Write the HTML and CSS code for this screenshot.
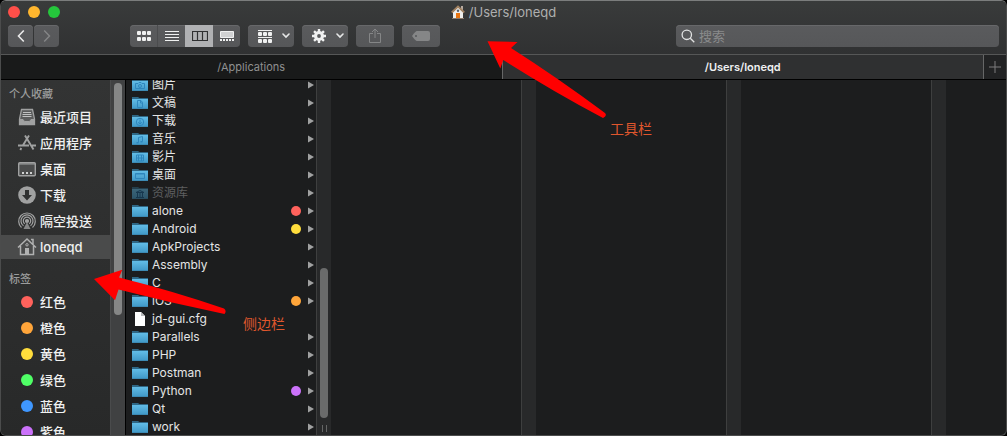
FILE: index.html
```html
<!DOCTYPE html>
<html lang="zh-CN">
<head>
<meta charset="utf-8">
<meta name="viewport" content="width=device-width, initial-scale=1">
<title>/Users/loneqd</title>
<link rel="stylesheet" href="styles.css">
</head>
<body>
<svg class="defs" aria-hidden="true">
  <defs>
    <linearGradient id="blue" x1="0" y1="0" x2="0" y2="1"><stop offset="0" stop-color="#62bce6"/><stop offset="1" stop-color="#3f97c6"/></linearGradient>
    <symbol id="folder" viewBox="0 0 16 14">
      <path d="M0 1h6l1.500 1H16v2H0z" fill="#2f6785"/>
      <path d="M0 3h16v10H0z" fill="url(#blue)"/>
      <path d="M0 12.500h16" stroke="#3c8ab4"/>
    </symbol>
    <symbol id="file" viewBox="0 0 16 14"><path d="M3 0h6l4 4v10H3z" fill="#fff"/><path d="M9 0v4h4z" fill="#b9bbbc"/></symbol>
    <symbol id="more" viewBox="0 0 6 8"><path d="M0 .5v7L6 4z" fill="#a0a1a1"/></symbol>
    <symbol id="chev" viewBox="0 0 8 6"><path d="M1 1l3 3 3-3" fill="none" stroke="#e6e7e7" stroke-width="1.600" stroke-linecap="round"/></symbol>
  </defs>
</svg>

<main class="window">
  <header class="header">
    <div class="titlebar">
      <div class="lights">
        <button class="light close" aria-label="关闭"></button>
        <button class="light minimise" aria-label="最小化"></button>
        <button class="light expand" aria-label="全屏"></button>
      </div>
      <h1 class="title">
        <svg width="14" height="14" viewBox="0 0 14 14" aria-hidden="true"><path d="M10 1h2v4h-2z" fill="#b7aaa0"/><path d="M2 7l5-5 5 5v6H2z" fill="#eeeeec"/><path d="M.7 7.500L7 1.500l6.300 6" fill="none" stroke="#a28363" stroke-width="1.800"/><path d="M5 8h4v5H5z" fill="#e87511"/><circle cx="7" cy="5.800" r="1.200" fill="#57616d"/><path d="M1 13.500h12" stroke="#8a7969"/></svg>
        <span>/Users/loneqd</span>
      </h1>
    </div>
    <div class="toolbar">
      <div class="nav">
        <button class="btn back" aria-label="后退"><svg width="8" height="14" viewBox="0 0 8 14"><path d="M6.800 1.500L1.500 7l5.300 5.500" fill="none" stroke="#e8e8e8" stroke-width="1.600"/></svg></button>
        <button class="btn forward" aria-label="前进"><svg width="8" height="14" viewBox="0 0 8 14"><path d="M1.200 1.500L6.500 7l-5.300 5.500" fill="none" stroke="#858687" stroke-width="1.400"/></svg></button>
      </div>
      <div class="views">
        <button class="seg" aria-label="图标"><svg width="14" height="10" viewBox="0 0 14 10" fill="#f0f1f1"><rect width="4" height="4" rx="1"/><rect x="5" width="4" height="4" rx="1"/><rect x="10" width="4" height="4" rx="1"/><rect y="6" width="4" height="4" rx="1"/><rect x="5" y="6" width="4" height="4" rx="1"/><rect x="10" y="6" width="4" height="4" rx="1"/></svg></button>
        <button class="seg" aria-label="列表"><svg width="14" height="10" viewBox="0 0 14 10"><path d="M0 .5h14M0 3.500h14M0 6.500h14M0 9.500h14" stroke="#f0f1f1"/></svg></button>
        <button class="seg active" aria-label="分栏" aria-pressed="true"><svg width="16" height="10" viewBox="0 0 16 10"><path d="M.5.5h15v9H.5zM5.500.5v9M10.500.5v9" fill="none" stroke="#2f3031" stroke-width="1.200"/></svg></button>
        <button class="seg" aria-label="画廊"><svg width="14" height="10" viewBox="0 0 14 10" fill="#f0f1f1"><path d="M.5.5h13v6H.5z" fill="#d0d1d2" stroke="#f0f1f1"/><path d="M0 8h2v2H0zM3 8h2v2H3zM6 8h2v2H6zM9 8h2v2H9zM12 8h2v2h-2z"/></svg></button>
      </div>
      <button class="btn menu" aria-label="分组"><svg width="14" height="13" viewBox="0 0 14 13" fill="#f0f1f1"><path d="M0 0h14v1H0zM0 7h14v1H0z"/><rect y="2" width="4" height="4" rx="1"/><rect x="5" y="2" width="4" height="4" rx="1"/><rect x="10" y="2" width="4" height="4" rx="1"/><rect y="9" width="4" height="4" rx="1"/><rect x="5" y="9" width="4" height="4" rx="1"/><rect x="10" y="9" width="4" height="4" rx="1"/></svg><svg width="8" height="6"><use href="#chev"/></svg></button>
      <button class="btn menu" aria-label="操作"><svg width="14" height="14" viewBox="0 0 14 14"><path d="M7 0v14M0 7h14M2.050 2.050l9.900 9.900M11.950 2.050l-9.900 9.900" stroke="#f0f1f1" stroke-width="2.400"/><circle cx="7" cy="7" r="3.500" fill="none" stroke="#f0f1f1" stroke-width="3"/><circle cx="7" cy="7" r="1.900" fill="#5b5c5e"/></svg><svg width="8" height="6"><use href="#chev"/></svg></button>
      <button class="btn action" aria-label="共享"><svg width="12" height="16" viewBox="0 0 12 16" fill="none" stroke="#858687"><path d="M4 5.500H.5v9h11v-9H8M6 10V1M3 4l3-3 3 3"/></svg></button>
      <button class="btn action" aria-label="标签"><svg width="18" height="10" viewBox="0 0 18 10"><path d="M5 0h11a2 2 0 0 1 2 2v6a2 2 0 0 1-2 2H5Q3.500 10 0 5 3.500 0 5 0z" fill="#858687"/><circle cx="4" cy="5" r="1" fill="#56575a"/></svg></button>
      <label class="search">
        <svg width="14" height="14" viewBox="0 0 14 14" fill="none" stroke="#e1e2e2" stroke-width="1.300"><circle cx="5.800" cy="5.800" r="4.700"/><path d="M9.300 9.300l4 4"/></svg>
        <input type="search" placeholder="搜索" aria-label="搜索">
      </label>
    </div>
  </header>

  <div class="tabs" role="tablist">
    <button class="tab" role="tab">/Applications</button>
    <button class="tab current" role="tab" aria-selected="true">/Users/loneqd</button>
    <button class="add" aria-label="新建标签页"><svg width="12" height="12" viewBox="0 0 12 12"><path d="M6 0v12M0 6h12" stroke="#7c7d7d"/></svg></button>
  </div>

  <div class="content">
    <aside class="sidebar">
      <nav class="places">
        <h2 class="group">个人收藏</h2>
        <a class="place" href="#"><svg width="20" height="20" viewBox="0 0 20 20" fill="none" stroke="#a0a1a1"><path d="M4.500 2.500h11L17.500 12v5.500h-15V12z" fill="#5b5c5c" stroke-width="1.300"/><path d="M6 5.500h8M5.500 7.500h9M5.500 9.500h9" stroke="#c0c1c1"/><path d="M3 12.500h3l1.500 2h5l1.500-2h3v4.500H3z" fill="#a0a1a1"/></svg>最近项目</a>
        <a class="place" href="#"><svg width="20" height="20" viewBox="0 0 20 20" fill="none" stroke="#a0a1a1" stroke-width="1.900"><path d="M8 2.500l8.500 14M12 2.500L5.500 13M1 12.500h11M15 12.500h4M4.300 15l-1 2"/></svg>应用程序</a>
        <a class="place" href="#"><svg width="20" height="20" viewBox="0 0 20 20"><rect x="1.700" y="3.700" width="16.600" height="13" rx="1" fill="#4b4c4c" stroke="#a0a1a1" stroke-width="1.400"/><path d="M2 5h16" stroke="#a0a1a1"/><path d="M5 13h2v2H5zM9 13h2v2H9zM13 13h2v2h-2z" fill="#d0d1d1"/></svg>桌面</a>
        <a class="place" href="#"><svg width="20" height="20" viewBox="0 0 20 20"><circle cx="10" cy="10" r="8.800" fill="#a0a1a1"/><path d="M8 5h4v5h3l-5 5.500L5 10h3z" fill="#303131"/></svg>下载</a>
        <a class="place" href="#"><svg width="20" height="20" viewBox="0 0 20 20" fill="none" stroke="#a0a1a1" stroke-width="1.200"><path d="M4.500 16.500a8.300 8.300 0 1 1 11 0M6.500 14.800a6 6 0 1 1 7 0M7.800 12.800a3.700 3.700 0 1 1 4.400 0"/><circle cx="10" cy="10" r="1.500" fill="#a0a1a1"/><path d="M10 11l-3.500 7h7z" fill="#858686" stroke="none"/></svg>隔空投送</a>
        <a class="place selected" href="#" aria-current="page"><svg width="20" height="20" viewBox="0 0 20 20" fill="none" stroke="#b0b1b1" stroke-width="1.500"><path d="M14 2.500h2v5M1 10.500L10 2l9 8.500M3.500 9v8.500h13V9"/><path d="M8 11h4v6H8z" fill="#b0b1b1" stroke="none"/><circle cx="10" cy="7.800" r="1.200" stroke-width="1"/></svg>loneqd</a>
        <h2 class="group second">标签</h2>
        <a class="place" href="#"><span class="tag"><i class="dot red"></i></span>红色</a>
        <a class="place" href="#"><span class="tag"><i class="dot orange"></i></span>橙色</a>
        <a class="place" href="#"><span class="tag"><i class="dot yellow"></i></span>黄色</a>
        <a class="place" href="#"><span class="tag"><i class="dot green"></i></span>绿色</a>
        <a class="place" href="#"><span class="tag"><i class="dot blue"></i></span>蓝色</a>
        <a class="place" href="#"><span class="tag"><i class="dot purple"></i></span>紫色</a>
      </nav>
      <div class="side-track"><div class="side-thumb"></div></div>
    </aside>

    <section class="column">
      <div class="files">
        <a class="row" href="#"><svg class="icon" viewBox="0 0 16 14"><use href="#folder"/><g fill="none" stroke="#2f86bd"><path d="M3.500 5.500H6l1-1h2l1 1h2.500v5h-9z"/><circle cx="8" cy="8" r="1.500"/></g></svg><span class="name">图片</span><svg class="more"><use href="#more"/></svg></a>
        <a class="row" href="#"><svg class="icon" viewBox="0 0 16 14"><use href="#folder"/><path d="M5.500 4.500H9l1.500 2v5h-5zM8.500 4.500v2.500h2" fill="none" stroke="#2f86bd"/></svg><span class="name">文稿</span><svg class="more"><use href="#more"/></svg></a>
        <a class="row" href="#"><svg class="icon" viewBox="0 0 16 14"><use href="#folder"/><g fill="none" stroke="#2f86bd"><circle cx="8" cy="8" r="3.700"/><path d="M8 5.500v4.500M6.200 8.300L8 10l1.800-1.700"/></g></svg><span class="name">下载</span><svg class="more"><use href="#more"/></svg></a>
        <a class="row" href="#"><svg class="icon" viewBox="0 0 16 14"><use href="#folder"/><path d="M6.500 10.500V5.500l4-1v5" fill="none" stroke="#2f86bd"/><path d="M4.500 10h2v1.500h-2zM8.500 9h2v1.500h-2z" fill="#2f86bd"/></svg><span class="name">音乐</span><svg class="more"><use href="#more"/></svg></a>
        <a class="row" href="#"><svg class="icon" viewBox="0 0 16 14"><use href="#folder"/><path d="M4.500 5h7v6h-7zM6.500 5v6M9.500 5v6M4.500 8h7" fill="none" stroke="#2f86bd"/></svg><span class="name">影片</span><svg class="more"><use href="#more"/></svg></a>
        <a class="row" href="#"><svg class="icon" viewBox="0 0 16 14"><use href="#folder"/><path d="M3.500 5.500h9v5h-9zM3.500 6h9" fill="none" stroke="#2f86bd"/></svg><span class="name">桌面</span><svg class="more"><use href="#more"/></svg></a>
        <a class="row dim" href="#"><svg class="icon" viewBox="0 0 16 14"><use href="#folder"/><path d="M4 6.500l4-2 4 2zM4 11.500h8M5.500 7v4M8 7v4M10.500 7v4" fill="none" stroke="#12578a"/></svg><span class="name">资源库</span><svg class="more"><use href="#more"/></svg></a>
        <a class="row" href="#"><svg class="icon"><use href="#folder"/></svg><span class="name">alone</span><i class="dot small red"></i><svg class="more"><use href="#more"/></svg></a>
        <a class="row" href="#"><svg class="icon"><use href="#folder"/></svg><span class="name">Android</span><i class="dot small yellow"></i><svg class="more"><use href="#more"/></svg></a>
        <a class="row" href="#"><svg class="icon"><use href="#folder"/></svg><span class="name">ApkProjects</span><svg class="more"><use href="#more"/></svg></a>
        <a class="row" href="#"><svg class="icon"><use href="#folder"/></svg><span class="name">Assembly</span><svg class="more"><use href="#more"/></svg></a>
        <a class="row" href="#"><svg class="icon"><use href="#folder"/></svg><span class="name">C</span><svg class="more"><use href="#more"/></svg></a>
        <a class="row" href="#"><svg class="icon"><use href="#folder"/></svg><span class="name">iOS</span><i class="dot small orange"></i><svg class="more"><use href="#more"/></svg></a>
        <a class="row" href="#"><svg class="icon"><use href="#file"/></svg><span class="name">jd-gui.cfg</span></a>
        <a class="row" href="#"><svg class="icon"><use href="#folder"/></svg><span class="name">Parallels</span><svg class="more"><use href="#more"/></svg></a>
        <a class="row" href="#"><svg class="icon"><use href="#folder"/></svg><span class="name">PHP</span><svg class="more"><use href="#more"/></svg></a>
        <a class="row" href="#"><svg class="icon"><use href="#folder"/></svg><span class="name">Postman</span><svg class="more"><use href="#more"/></svg></a>
        <a class="row" href="#"><svg class="icon"><use href="#folder"/></svg><span class="name">Python</span><i class="dot small purple"></i><svg class="more"><use href="#more"/></svg></a>
        <a class="row" href="#"><svg class="icon"><use href="#folder"/></svg><span class="name">Qt</span><svg class="more"><use href="#more"/></svg></a>
        <a class="row" href="#"><svg class="icon"><use href="#folder"/></svg><span class="name">work</span><svg class="more"><use href="#more"/></svg></a>
      </div>
      <div class="track"><div class="thumb"></div><div class="grip"></div></div>
    </section>
    <section class="column"><div class="files"></div><div class="track"></div></section>
    <section class="column"><div class="files"></div><div class="track"></div></section>
    <section class="column"><div class="files"></div><div class="track"></div></section>
  </div>
</main>

<svg class="arrow arrow-toolbar" width="120" height="80" viewBox="0 0 120 80" aria-hidden="true"><path d="M1.500 1.300L31.500 2 25 8Q72 38 119 73 121.500 76 117 78 66 51 17.300 20L14.300 28.500z"/></svg>
<p class="note note-toolbar">工具栏</p>
<svg class="arrow arrow-sidebar" width="134" height="48" viewBox="0 0 134 48" aria-hidden="true"><path d="M1 12L29.300 2.700 26 10.500Q80 24 131 41.500 134 44 131.500 47 78 36 25.500 22.500L22 33.300z"/></svg>
<p class="note note-sidebar">侧边栏</p>
</body>
</html>
```

FILE: styles.css
```css
* { box-sizing: border-box; }

body {
  margin: 0;
  background: #000;
  color: #e4e5e5;
  font-family: Inter, "Noto Sans CJK SC", sans-serif;
  font-size: 12px;
}

button, input {
  margin: 0;
  padding: 0;
  border: 0;
  background: none;
  color: inherit;
  font: inherit;
}

a { color: inherit; text-decoration: none; }
h1, h2, p { margin: 0; font-weight: 400; }
svg { display: block; flex: none; }
.defs { position: absolute; width: 0; height: 0; }

.window {
  display: flex;
  flex-direction: column;
  height: 100vh;
  overflow: hidden;
  border: 1px solid #4b4c4c;
  border-top-color: #7b7d7d;
  border-radius: 6px;
  background: #1c1d1e;
}

.header {
  border-bottom: 1px solid #565757;
  background: linear-gradient(#393b3b, #303132);
}

.titlebar {
  display: grid;
  grid-template-columns: 1fr auto 1fr;
  align-items: center;
  height: 21px;
  padding: 0 7px;
}

.lights { display: flex; gap: 8px; }
.light { width: 12px; height: 12px; border-radius: 50%; }
.close { background: #ff4f49; }
.minimise { background: #ffb62e; }
.expand { background: #25c73c; }

.title {
  display: flex;
  align-items: center;
  gap: 4px;
  color: #aeafaf;
  font-size: 13px;
}

.toolbar {
  display: flex;
  gap: 8px;
  padding: 3px 7px 7px;
}

.nav { display: flex; gap: 1px; margin-right: 63px; }

.btn, .views, .search {
  height: 22px;
  border-radius: 4px;
  background: linear-gradient(#5a5b5d, #565759);
  box-shadow: inset 0 1px #67686a;
}

.btn {
  display: flex;
  align-items: center;
  justify-content: center;
}
.back, .forward { width: 25px; }
.menu { width: 46px; gap: 10px; padding-left: 6px; }
.action { width: 38px; }

.views { display: flex; overflow: hidden; width: 110px; }
.seg {
  display: flex;
  flex: 1;
  align-items: center;
  justify-content: center;
  border-left: 1px solid #4b4c4e;
}
.seg:first-child { border-left: 0; }
.seg.active { border-color: #b0b1b3; background: #b0b1b3; }
.seg.active + .seg { border-left: 0; }

.search {
  display: flex;
  flex: 0 1 323px;
  align-items: center;
  gap: 4px;
  margin-left: auto;
  padding: 0 5px;
}
.search input { flex: 1; min-width: 0; outline: 0; font-size: 13px; }
.search input::placeholder { color: #8a8b8c; opacity: 1; }

.tabs {
  display: flex;
  height: 25px;
  border-bottom: 1px solid #000;
  background: #191a1a;
}
.tab { width: calc(50% - 2px); color: #8f9090; font-size: 11px; }
.tab.current {
  flex: 1;
  border: solid #666767;
  border-width: 0 1px;
  background: #2f3031;
  color: #f0f1f1;
  font-weight: 600;
}
.add {
  display: flex;
  align-items: center;
  justify-content: center;
  width: 22px;
  background: #222324;
}

.content { display: flex; flex: 1; min-height: 0; }

.sidebar {
  display: flex;
  flex: none;
  width: 125px;
  border-right: 1px solid #000;
  background: linear-gradient(#333434, #282929);
}
.places { flex: 1; overflow: hidden; }

.group {
  height: 25px;
  padding-left: 8px;
  color: #9b9c9c;
  font-size: 11px;
  font-weight: 500;
  line-height: 28px;
}
.group.second { height: 29px; line-height: 36px; }

.place {
  display: flex;
  align-items: center;
  gap: 3px;
  height: 24px;
  margin-bottom: 2px;
  padding-left: 16px;
  color: #f0f1f1;
  font-size: 13px;
  font-weight: 500;
  line-height: 24px;
}
.place.selected { background: #4a4b4b; }

.tag { display: flex; justify-content: center; width: 20px; }
.dot { flex: none; width: 12px; height: 12px; border-radius: 50%; }
.dot.small { width: 10px; height: 10px; margin-right: 7px; }
.red { background: #ff625c; }
.orange { background: #ffa53a; }
.yellow { background: #ffdd3c; }
.green { background: #4fff66; }
.blue { background: #3f97ff; }
.purple { background: #cb72fa; }

.side-track {
  width: 15px;
  padding: 3px 3px 0;
  border-left: 1px solid #4a4b4c;
  background: #404142;
}
.side-thumb { height: 66%; border-radius: 4px; background: #858686; }

.column { display: flex; flex: none; width: 205px; }
.files { flex: 1; overflow: hidden; }

.row {
  display: flex;
  align-items: center;
  height: 18px;
  padding: 0 2px 0 6px;
  line-height: 18px;
}
.row:first-child { margin-top: -4px; }
.icon { width: 16px; height: 14px; margin-right: 4px; }
.name { flex: 1; white-space: nowrap; }
.more { width: 6px; height: 8px; }
.dim .icon { opacity: .45; }
.dim .name { color: #5e5f60; }

.track {
  display: flex;
  flex-direction: column;
  justify-content: flex-end;
  align-items: center;
  width: 15px;
  border-left: 1px solid #3e3f3f;
  background: #28292a;
}
.thumb { width: 8px; height: 150px; border-radius: 4px; background: #6a6b6b; }
.grip {
  width: 5px;
  height: 7px;
  margin: 7px 0 3px;
  border: solid #656666;
  border-width: 0 1px;
}

/* Annotations drawn over the window */
.arrow { position: absolute; fill: #f00; }
.arrow-toolbar { left: 486px; top: 40px; }
.arrow-sidebar { left: 93px; top: 267px; }
.note {
  position: absolute;
  color: #df562d;
  font-size: 14px;
  line-height: 20px;
}
.note-toolbar { left: 610px; top: 119px; }
.note-sidebar { left: 243px; top: 314px; }
```
